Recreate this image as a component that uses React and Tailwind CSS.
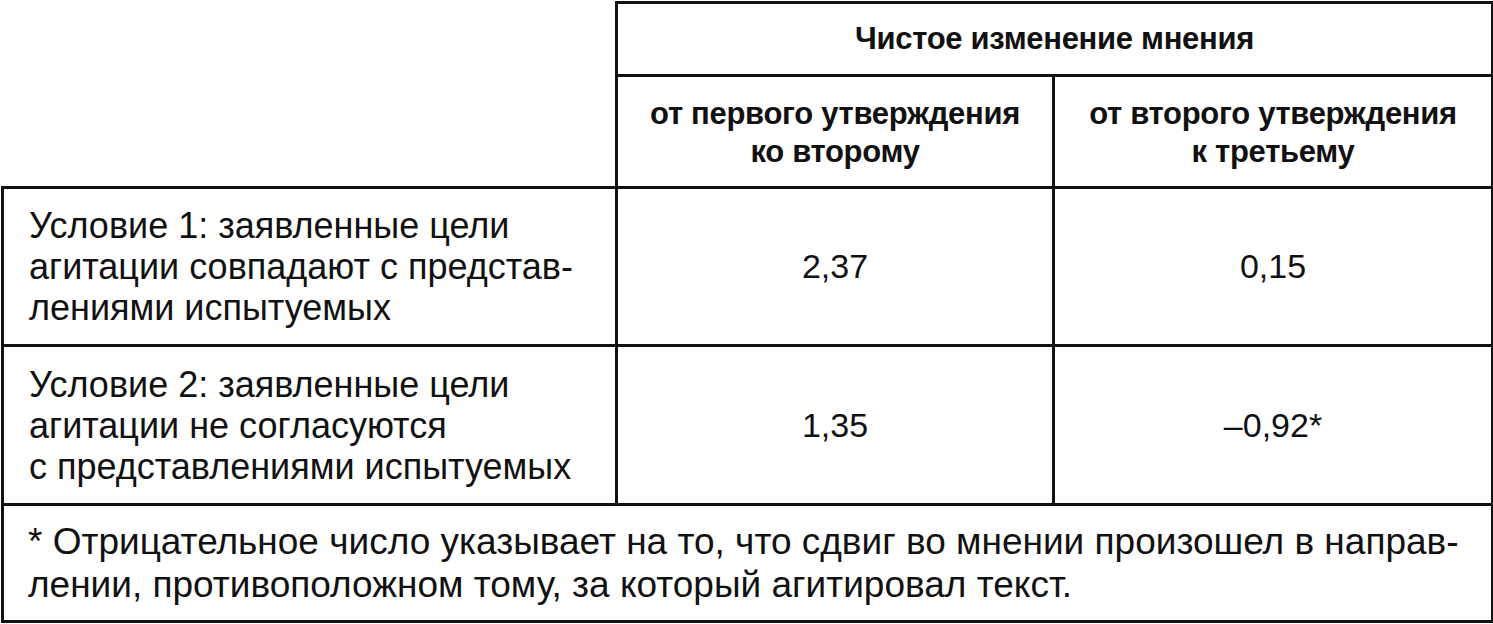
const rows = [
  {
    label: ['Условие 1: заявленные цели', 'агитации совпадают с представ-', 'лениями испытуемых'],
    first: '2,37',
    second: '0,15',
    h: 'h-[158px]',
  },
  {
    label: ['Условие 2: заявленные цели', 'агитации не согласуются', 'с представлениями испытуемых'],
    first: '1,35',
    second: '–0,92*',
    h: 'h-[159px]',
  },
]

export default function App() {
  return (
    <div className="min-h-screen bg-white pt-[1px] pl-[1px] text-[#111] font-['Liberation_Sans',Arial,sans-serif]">
      <table className="w-[1490px] table-fixed border-collapse">
        <colgroup>
          <col className="w-[614px]" />
          <col className="w-[437px]" />
          <col className="w-[439px]" />
        </colgroup>
        <thead>
          <tr className="h-[73px]">
            <th rowSpan={2} className="border-r-[3px] border-[#111]" />
            <th colSpan={2} className="border-[3px] border-[#111] text-center text-[31px] font-bold tracking-[-0.3px]">
              Чистое изменение мнения
            </th>
          </tr>
          <tr className="h-[112px]">
            <th className="border-[3px] border-[#111] pt-[2px] text-center text-[31px] leading-[38px] font-bold tracking-[-0.3px]">
              от первого утверждения
              <br />
              ко второму
            </th>
            <th className="border-[3px] border-[#111] pt-[2px] text-center text-[31px] leading-[38px] font-bold tracking-[-0.3px]">
              от второго утверждения
              <br />
              к третьему
            </th>
          </tr>
        </thead>
        <tbody>
          {rows.map((r) => (
            <tr key={r.first} className={r.h}>
              <td className="border-[3px] border-[#111] pl-[25px] text-[36px] leading-[41px] align-middle">
                {r.label.map((l, i) => (
                  <div key={i}>{l}</div>
                ))}
              </td>
              <td className="border-[3px] border-[#111] text-center text-[34px]">{r.first}</td>
              <td className="border-[3px] border-[#111] text-center text-[34px]">{r.second}</td>
            </tr>
          ))}
          <tr className="h-[117px]">
            <td colSpan={3} className="border-[3px] border-[#111] pl-[24px] pr-[10px] text-[37px] leading-[43px]">
              * Отрицательное число указывает на то, что сдвиг во мнении произошел в направ-
              <br />
              лении, противоположном тому, за который агитировал текст.
            </td>
          </tr>
        </tbody>
      </table>
    </div>
  )
}
